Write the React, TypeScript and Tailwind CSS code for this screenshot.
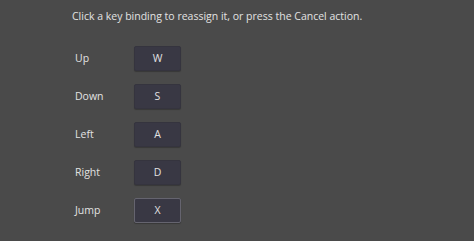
import React from "react";

const rows: { label: string; key: string; focused?: boolean }[] = [
  { label: "Up", key: "W" },
  { label: "Down", key: "S" },
  { label: "Left", key: "A" },
  { label: "Right", key: "D" },
  { label: "Jump", key: "X", focused: true },
];

export default function App() {
  return (
    <div
      className="w-[474px] h-[241px] bg-[#4a4a4a] text-[#e2e2e2] overflow-hidden"
      style={{ fontFamily: '"Open Sans", "Noto Sans", sans-serif' }}
    >
      <div className="pl-[72px] pt-[8px]">
        <div className="h-[16px] leading-[16px] text-[10.5px]">
          Click a key binding to reassign it, or press the Cancel action.
        </div>
        <div className="mt-[22px] flex flex-col gap-[13px] pl-[3px]">
          {rows.map((r) => (
            <div key={r.label} className="flex items-center h-[25px]">
              <div className="w-[59px] text-[10.5px]">{r.label}</div>
              <button
                className={
                  "w-[47px] h-[25px] rounded-[2px] bg-[#393844] text-[10.5px] text-[#e2e2e2] flex items-center justify-center border shadow-[0_1px_1px_rgba(0,0,0,0.25)] " +
                  (r.focused ? "border-[#65646f]" : "border-[#35343e]")
                }
              >
                {r.key}
              </button>
            </div>
          ))}
        </div>
      </div>
    </div>
  );
}
